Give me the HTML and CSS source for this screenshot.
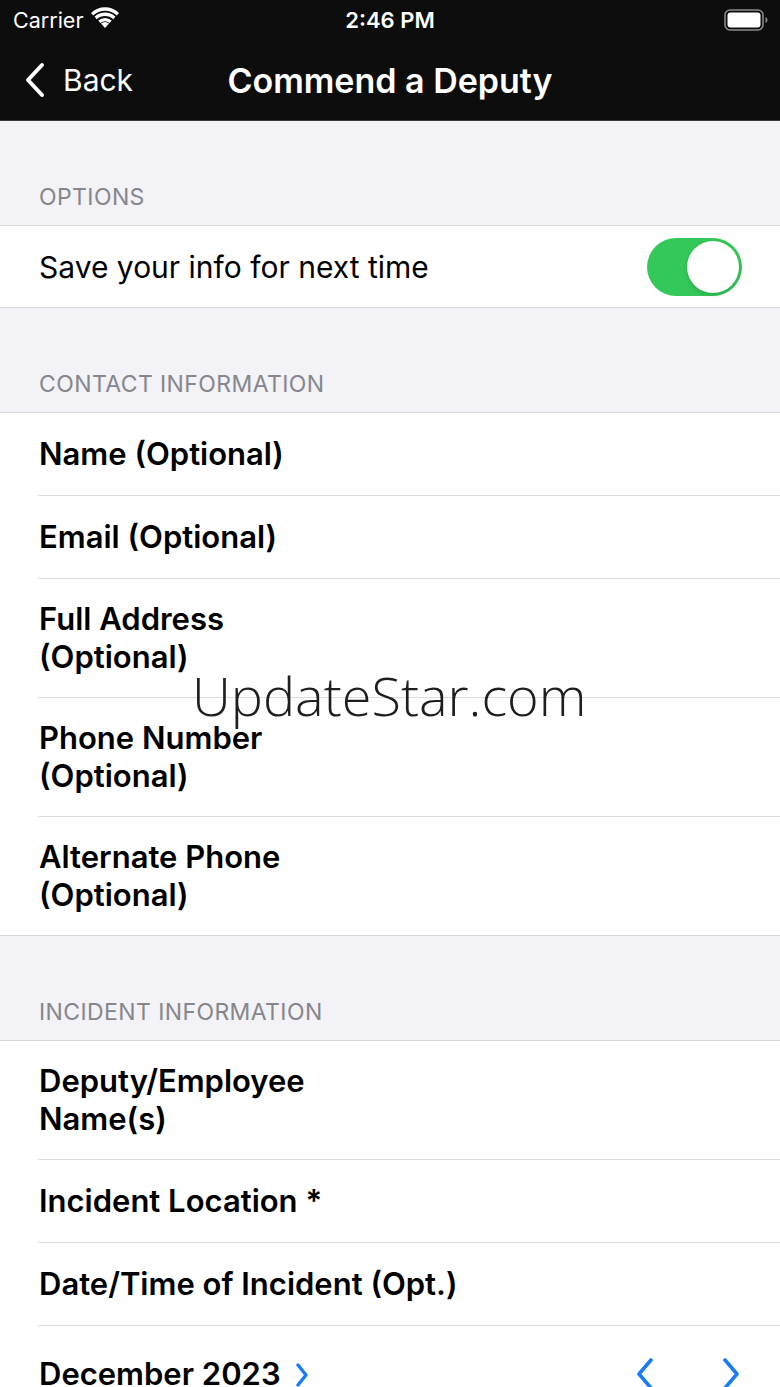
FILE: index.html
```html
<!DOCTYPE html>
<html>
    <head>
        <title>Commend a Deputy</title>
        <meta charset="UTF-8">
        <meta name="viewport" content="width=device-width, initial-scale=1.0">
        <link rel="stylesheet" href="styles.css">
    </head>
    <body>
        <div class="top">
            <div class="status">
                <div class="carrier">Carrier
                    <svg class="wifi" width="30" height="22" viewBox="0 0 30 22">
                        <path d="M15 21 L11 16.6 A6 6 0 0 1 19 16.6 Z" fill="#fff"/>
                        <path d="M8.2 13.6 A10 10 0 0 1 21.8 13.6 L19.6 15.9 A7 7 0 0 0 10.4 15.9 Z" fill="#fff"/>
                        <path d="M4.6 9.8 A15 15 0 0 1 25.4 9.8 L23.2 12.2 A12 12 0 0 0 6.8 12.2 Z" fill="#fff"/>
                        <path d="M1 6 A20 20 0 0 1 29 6 L26.8 8.4 A17 17 0 0 0 3.2 8.4 Z" fill="#fff"/>
                    </svg>
                </div>
                <div class="clock">2:46 PM</div>
                <div class="battery">
                    <svg width="44" height="22" viewBox="0 0 44 22">
                        <rect x="1" y="1" width="38" height="20" rx="5" fill="none" stroke="#8a8a8a" stroke-width="1.6"/>
                        <rect x="3.5" y="3.5" width="33" height="15" rx="3" fill="#fff"/>
                        <path d="M41.5 8 Q43.5 8.5 43.5 11 Q43.5 13.5 41.5 14 Z" fill="#8a8a8a"/>
                    </svg>
                </div>
            </div>
            <div class="nav">
                <div class="back">
                    <svg width="24" height="36" viewBox="0 0 24 36">
                        <path d="M19 3 L5 18 L19 33" fill="none" stroke="#fff" stroke-width="4" stroke-linecap="round" stroke-linejoin="round"/>
                    </svg>
                    <span>Back</span>
                </div>
                <div class="title">Commend a Deputy</div>
            </div>
        </div>

        <div class="section-head">OPTIONS</div>
        <div class="group">
            <div class="row switch-row">
                <span class="plain">Save your info for next time</span>
                <div class="toggle"><div class="knob"></div></div>
            </div>
        </div>

        <div class="section-head">CONTACT INFORMATION</div>
        <div class="group">
            <div class="row"><span class="label">Name (Optional)</span></div>
            <div class="row"><span class="label">Email (Optional)</span></div>
            <div class="row tall"><span class="label">Full Address<br>(Optional)</span></div>
            <div class="row tall"><span class="label">Phone Number<br>(Optional)</span></div>
            <div class="row tall"><span class="label">Alternate Phone<br>(Optional)</span></div>
        </div>

        <div class="section-head">INCIDENT INFORMATION</div>
        <div class="group">
            <div class="row tall"><span class="label">Deputy/Employee<br>Name(s)</span></div>
            <div class="row"><span class="label">Incident Location *</span></div>
            <div class="row"><span class="label">Date/Time of Incident (Opt.)</span></div>
            <div class="row month-row">
                <span class="label">December 2023
                    <svg class="mini" width="16" height="26" viewBox="0 0 16 26">
                        <path d="M4 3 L12 13 L4 23" fill="none" stroke="#1a7cf5" stroke-width="3.4" stroke-linecap="round" stroke-linejoin="round"/>
                    </svg>
                </span>
                <div class="arrows">
                    <svg width="24" height="34" viewBox="0 0 24 34">
                        <path d="M18 3 L6 17 L18 31" fill="none" stroke="#1a7cf5" stroke-width="3.6" stroke-linecap="round" stroke-linejoin="round"/>
                    </svg>
                    <svg width="24" height="34" viewBox="0 0 24 34">
                        <path d="M6 3 L18 17 L6 31" fill="none" stroke="#1a7cf5" stroke-width="3.6" stroke-linecap="round" stroke-linejoin="round"/>
                    </svg>
                </div>
            </div>
        </div>

        <div class="watermark">UpdateStar.com</div>
    </body>
</html>
```

FILE: styles.css
```css
body{
    margin: 0px;
    background-color: #f2f2f7;
    font-family: Inter, Roboto, sans-serif;
    color: #000;
    height: 1387px;
    overflow: hidden;
    position: relative;
}
.top{
    background-color: #0d0d0d;
    color: #fff;
    height: 120px;
    border-bottom: 1px solid #3a3a3c;
}
.status{
    height: 40px;
    display: flex;
    align-items: center;
    justify-content: space-between;
    padding: 0px 12px 0px 13px;
    font-size: 21.5px;
    position: relative;
}
.carrier{
    display: flex;
    align-items: center;
    gap: 7px;
}
.wifi{
    margin-top: -4px;
}
.clock{
    position: absolute;
    left: 0px;
    right: 0px;
    text-align: center;
    font-weight: 600;
    font-size: 22px;
}
.battery{
    display: flex;
}
.nav{
    height: 80px;
    display: flex;
    align-items: center;
    position: relative;
}
.back{
    display: flex;
    align-items: center;
    gap: 16px;
    padding-left: 23px;
    font-size: 30px;
}
.title{
    position: absolute;
    left: 0px;
    right: 0px;
    text-align: center;
    font-size: 34px;
    font-weight: 600;
    pointer-events: none;
}
.section-head{
    height: 105px;
    box-sizing: border-box;
    display: flex;
    align-items: flex-end;
    padding: 0px 0px 16px 39px;
    font-size: 23px;
    letter-spacing: 0.4px;
    line-height: 24px;
    color: #86868b;
    border-bottom: 1px solid #d8d8dc;
}
.group{
    background-color: #fff;
    border-bottom: 1px solid #d8d8dc;
}
.row{
    height: 82px;
    margin-left: 38px;
    padding-left: 1px;
    display: flex;
    align-items: center;
    border-bottom: 1px solid #dcdcdf;
}
.row:last-child{
    border-bottom: none;
}
.row.tall{
    height: 118px;
}
.switch-row{
    justify-content: space-between;
    padding-right: 38px;
    height: 81px;
}
.plain{
    font-size: 30px;
}
.label{
    font-size: 31px;
    font-weight: 600;
    line-height: 38px;
}
.toggle{
    width: 95px;
    height: 58px;
    border-radius: 29px;
    background-color: #34c759;
    display: flex;
    align-items: center;
    justify-content: flex-end;
    padding-right: 3px;
    box-sizing: border-box;
}
.knob{
    width: 52px;
    height: 52px;
    border-radius: 50%;
    background-color: #fff;
    box-shadow: 0px 2px 4px rgba(0,0,0,0.15);
}
.month-row{
    justify-content: space-between;
    padding-right: 37px;
    height: 96px;
}
.mini{
    vertical-align: -3px;
    margin-left: 6px;
}
.arrows{
    display: flex;
    gap: 62px;
}
.watermark{
    position: absolute;
    left: 192px;
    top: 658px;
    font-family: "Open Sans", sans-serif;
    font-weight: 300;
    font-size: 54px;
    color: #1e1e1e;
}
```
